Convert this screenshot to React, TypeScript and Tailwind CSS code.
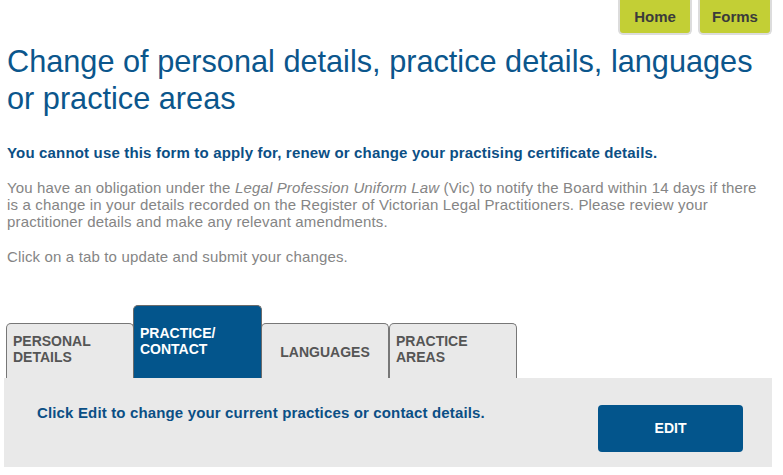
import React from 'react';

const tabs = [
  { label: ['PERSONAL', 'DETAILS'], active: false, center: false },
  { label: ['PRACTICE/', 'CONTACT'], active: true, center: false },
  { label: ['LANGUAGES'], active: false, center: true },
  { label: ['PRACTICE', 'AREAS'], active: false, center: false },
];

const App = () => {
  return (
    <div className="w-[783px] h-[475px] bg-white overflow-hidden font-['Liberation_Sans',Arial,sans-serif]">
      <div className="flex justify-end gap-[6px] pr-[11px]">
        {['Home', 'Forms'].map((item) => (
          <a
            key={item}
            className="h-[35px] w-[74px] flex items-center justify-center bg-[#c3cf35] border-2 border-t-0 border-[#dcdcdc] rounded-b-[5px] text-[15px] font-bold text-[#3b3b3b] pt-px"
          >
            {item}
          </a>
        ))}
      </div>

      <div className="pl-[7px] pr-[20px]">
        <h1 className="mt-[8px] -mr-[12px] text-[30.7px] leading-[37px] text-[#0b568c]">
          Change of personal details, practice details, languages or practice areas
        </h1>

        <p className="mt-[27px] text-[15px] leading-[17px] font-bold text-[#0b4f85] tracking-[0.17px]">
          You cannot use this form to apply for, renew or change your practising certificate details.
        </p>

        <p className="mt-[18px] text-[15px] leading-[17px] text-[#858585] tracking-[0.15px]">
          You have an obligation under the <i>Legal Profession Uniform Law</i> (Vic) to notify the Board within 14 days if there is a change in your details recorded on the Register of Victorian Legal Practitioners. Please review your practitioner details and make any relevant amendments.
        </p>

        <p className="mt-[18px] text-[15px] leading-[17px] text-[#858585] tracking-[0.15px]">
          Click on a tab to update and submit your changes.
        </p>
      </div>

      <div className="mt-[40px] pl-[6px] flex items-end">
        {tabs.map((tab) => (
          <div
            key={tab.label.join(' ')}
            className={
              tab.active
                ? 'w-[129px] h-[73px] -mx-px relative z-10 bg-[#03558c] border border-b-0 border-[#6b6b6b] rounded-t-[5px] pl-[6px] pt-[19px] text-[14px] leading-[16px] font-bold text-white'
                : tab.center
                ? 'w-[128px] h-[55px] bg-[#e9e9e9] border border-b-0 border-[#777] rounded-t-[5px] flex items-center justify-center pt-[2px] text-[14px] leading-[16px] font-bold text-[#555]'
                : 'w-[128px] h-[55px] bg-[#e9e9e9] border border-b-0 border-[#777] rounded-t-[5px] pl-[6px] pt-[9px] text-[14px] leading-[16px] font-bold text-[#555]'
            }
          >
            {tab.label.map((line) => (
              <div key={line}>{line}</div>
            ))}
          </div>
        ))}
      </div>

      <div className="ml-[4px] w-[768px] h-[89px] bg-[#e9e9e9] flex items-start justify-between pl-[33px] pr-[29px]">
        <p className="mt-[26px] text-[15px] leading-[17px] font-bold text-[#0b4f85] tracking-[0.15px]">
          Click Edit to change your current practices or contact details.
        </p>
        <button className="mt-[27px] w-[145px] h-[47px] rounded-[4px] bg-[#03558c] text-white text-[14px] font-bold">
          EDIT
        </button>
      </div>
    </div>
  );
};

export default App;
